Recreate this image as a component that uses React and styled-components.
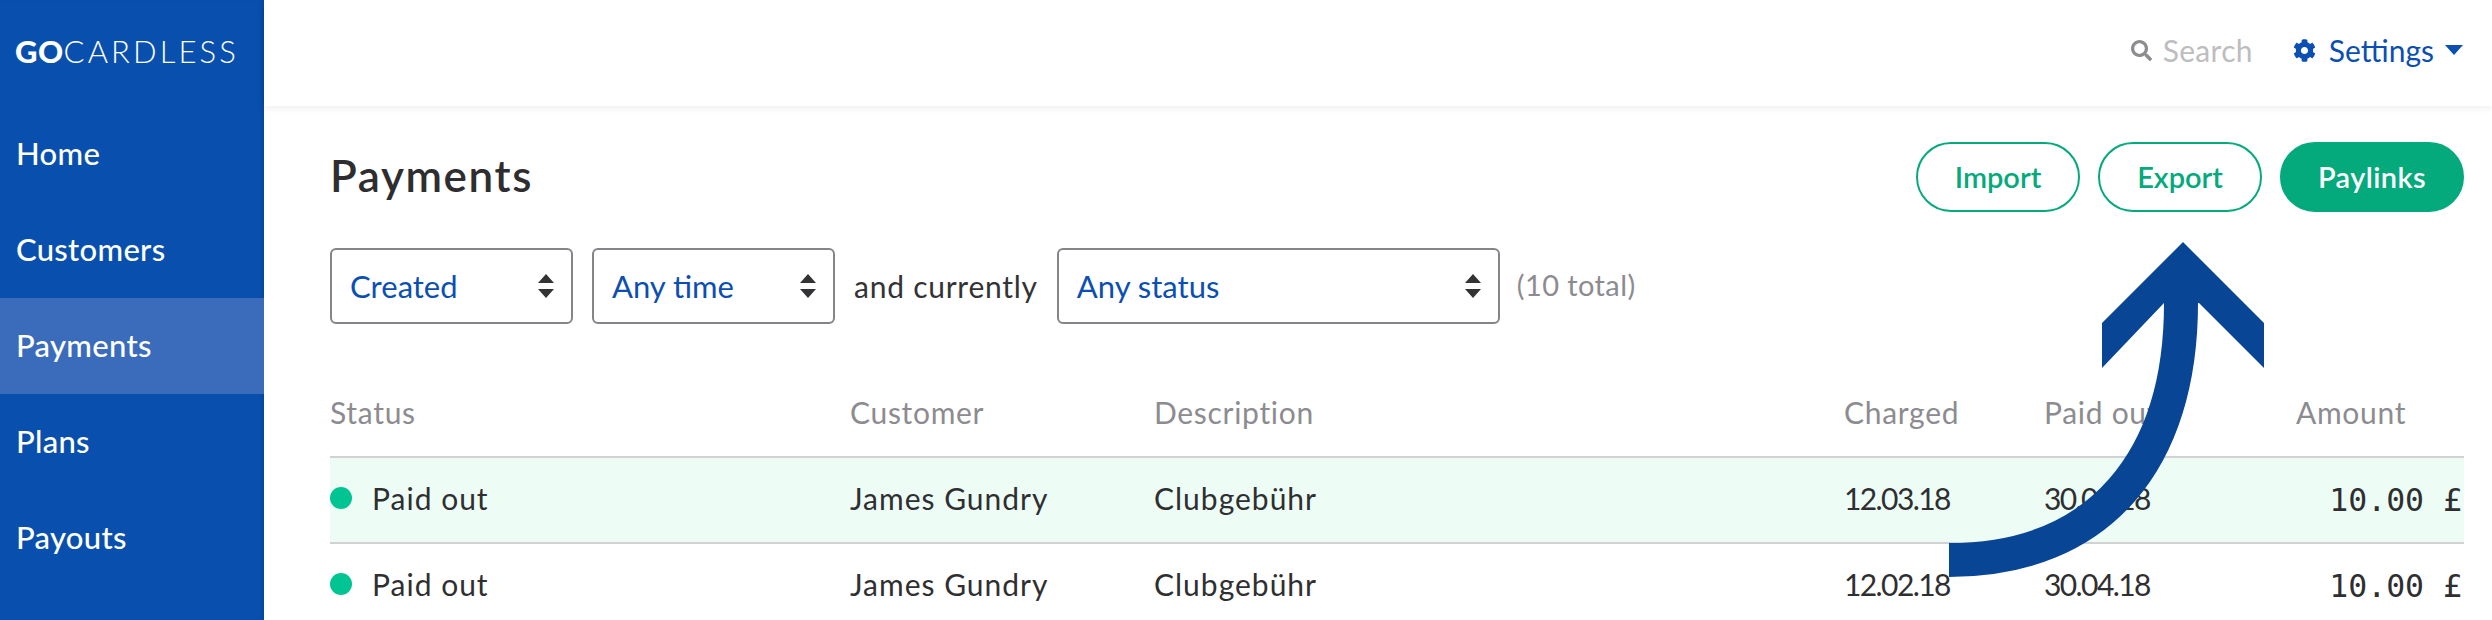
import { createGlobalStyle, styled } from "styled-components"
import { FaCog, FaSearch } from "react-icons/fa"

const GlobalStyle = createGlobalStyle`
  html, body {
    margin: 0;
    height: 100%;
    overflow: hidden;
    background: #fff;
    font-family: "Lato", "Liberation Sans", sans-serif;
    color: #2f2f31;
  }
  * { box-sizing: border-box; }
`

const Page = styled.div`
  position: relative;
  display: flex;
  width: 2492px;
  height: 620px;
  overflow: hidden;
`

const Sidebar = styled.nav`
  flex: 0 0 264px;
  height: 620px;
  background: #0950ae;
  box-shadow: inset -5px 0 5px -4px rgba(4, 40, 100, 0.35);
  color: #fff;
`

const Logo = styled.div`
  display: flex;
  align-items: center;
  height: 106px;
  padding: 0 0 4px 15px;
  font-size: 31px;
  font-weight: 300;
  letter-spacing: 3.1px;

  b { font-weight: 900; letter-spacing: 0.5px; }
`

const NavItem = styled.a`
  display: flex;
  align-items: center;
  height: 96px;
  padding: 0 0 2px 16px;
  font-size: 31px;
  font-weight: 500;
  letter-spacing: 0.3px;
  background: ${(p) => (p.$active ? "#3a6cbb" : "transparent")};
`

const Main = styled.div`
  flex: 1;
  min-width: 0;
`

const TopBar = styled.header`
  display: flex;
  justify-content: flex-end;
  align-items: center;
  height: 106px;
  padding: 0 29px 6px 0;
  box-shadow: 0 2px 8px rgba(0, 0, 0, 0.07);
`

const Search = styled.div`
  display: flex;
  align-items: center;
  gap: 11px;
  margin-right: 40px;
  font-size: 30px;
  letter-spacing: 0.3px;
  color: #bdbdc0;

  svg { color: #8d8d91; font-size: 21px; }
`

const Settings = styled.div`
  display: flex;
  align-items: center;
  gap: 13px;
  font-size: 30px;
  color: #0b4fb3;

  svg { font-size: 23px; }
`

const Caret = styled.span`
  width: 0;
  height: 0;
  margin-left: -2px;
  border: 9px solid transparent;
  border-top: 10px solid #0b4fb3;
  border-bottom: 0;
`

const Content = styled.main`
  padding: 36px 28px 0 66px;
`

const TitleRow = styled.div`
  display: flex;
  justify-content: space-between;
  align-items: center;
  height: 70px;
`

const Title = styled.h1`
  margin: -4px 0 0;
  font-size: 44px;
  font-weight: 600;
  letter-spacing: 1.6px;
  color: #2e2e30;
`

const Actions = styled.div`
  display: flex;
  gap: 18px;
`

const Button = styled.button`
  width: ${(p) => p.$width}px;
  height: 70px;
  padding: 0 0 2px;
  border: 2px solid #04a97c;
  border-radius: 35px;
  background: ${(p) => (p.$primary ? "#04a97c" : "#fff")};
  color: ${(p) => (p.$primary ? "#fff" : "#04a97c")};
  font-family: inherit;
  font-size: 29px;
  font-weight: 600;
  letter-spacing: ${(p) => (p.$primary ? "0.4px" : "0")};
`

const Filters = styled.div`
  display: flex;
  align-items: center;
  gap: 19px;
  margin-top: 36px;
`

const Select = styled.div`
  display: flex;
  justify-content: space-between;
  align-items: center;
  width: ${(p) => p.$width}px;
  height: 76px;
  padding: 0 16px 0 18px;
  border: 2px solid #858589;
  border-radius: 6px;
  font-size: 31px;
  color: #0b4fb3;
`

const FilterText = styled.span`
  font-size: 30px;
  letter-spacing: 0.75px;
  color: #333335;
`

const Total = styled.span`
  margin: -3px 0 0 -2px;
  font-size: 29px;
  letter-spacing: 0.4px;
  color: #8c8c90;
`

const Table = styled.div`
  margin-top: 68px;
`

const Row = styled.div`
  display: grid;
  grid-template-columns: 520px 304px 690px 200px 252px 1fr;
  align-items: center;
  height: ${(p) => p.$height}px;
  padding-bottom: ${(p) => (p.$head ? "24px" : "5px")};
  border-bottom: ${(p) => (p.$head ? "0" : "2px solid #d2d2d5")};
  background: ${(p) => (p.$paid ? "#edfdf6" : "transparent")};
  font-size: 30px;
  letter-spacing: ${(p) => (p.$head ? "0.7px" : "1px")};
  color: ${(p) => (p.$head ? "#8c8c90" : "#2f2f31")};
`

const Rule = styled.div`
  height: 2px;
  background: #d2d2d5;
`

const Status = styled.span`
  display: flex;
  align-items: center;
  gap: 20px;
`

const Dot = styled.i`
  width: 22px;
  height: 22px;
  border-radius: 50%;
  background: #00c592;
`

const DateText = styled.span`
  letter-spacing: -1.6px;
`

const Amount = styled.span`
  padding: 5px 2px 0 0;
  text-align: right;
  white-space: nowrap;
  font-family: "DejaVu Sans Mono", "Liberation Mono", monospace;
  font-size: 31.5px;
  letter-spacing: 0;
  color: #2f2f31;
`

const Arrow = styled.svg`
  position: absolute;
  top: 0;
  left: 0;
  pointer-events: none;
`

function UpDown() {
  return (
    <svg width="18" height="24" viewBox="0 0 18 24" fill="#333335">
      <path d="M9 0 17 9H1ZM1 15H17L9 24Z" />
    </svg>
  )
}

const rows = [
  { charged: "12.03.18", paid: true },
  { charged: "12.02.18" },
]

function App() {
  return (
    <Page>
      <GlobalStyle />
      <Sidebar>
        <Logo><b>GO</b>CARDLESS</Logo>
        <NavItem>Home</NavItem>
        <NavItem>Customers</NavItem>
        <NavItem $active>Payments</NavItem>
        <NavItem>Plans</NavItem>
        <NavItem>Payouts</NavItem>
      </Sidebar>
      <Main>
        <TopBar>
          <Search><FaSearch />Search</Search>
          <Settings><FaCog />Settings<Caret /></Settings>
        </TopBar>
        <Content>
          <TitleRow>
            <Title>Payments</Title>
            <Actions>
              <Button $width={164}>Import</Button>
              <Button $width={164}>Export</Button>
              <Button $width={184} $primary>Paylinks</Button>
            </Actions>
          </TitleRow>
          <Filters>
            <Select $width={243}>Created<UpDown /></Select>
            <Select $width={243}>Any time<UpDown /></Select>
            <FilterText>and currently</FilterText>
            <Select $width={443}>Any status<UpDown /></Select>
            <Total>(10 total)</Total>
          </Filters>
          <Table>
            <Row $head $height={64}>
              <span>Status</span>
              <span>Customer</span>
              <span>Description</span>
              <span>Charged</span>
              <span>Paid out</span>
              <span>Amount</span>
            </Row>
            <Rule />
            {rows.map((row) => (
              <Row key={row.charged} $height={86} $paid={row.paid}>
                <Status><Dot />Paid out</Status>
                <span>James Gundry</span>
                <span>Clubgebühr</span>
                <DateText>{row.charged}</DateText>
                <DateText>30.04.18</DateText>
                <Amount>10.00 £</Amount>
              </Row>
            ))}
          </Table>
        </Content>
      </Main>
      <Arrow width="2492" height="620" viewBox="0 0 2492 620">
        <path d="M2183 242 2264 323V368L2199 303H2164L2102 368V323Z" fill="#084595" />
        <path d="M1949 560C2100 560 2182 460 2181 300" fill="none" stroke="#084595" strokeWidth="34" />
      </Arrow>
    </Page>
  )
}

export default App
